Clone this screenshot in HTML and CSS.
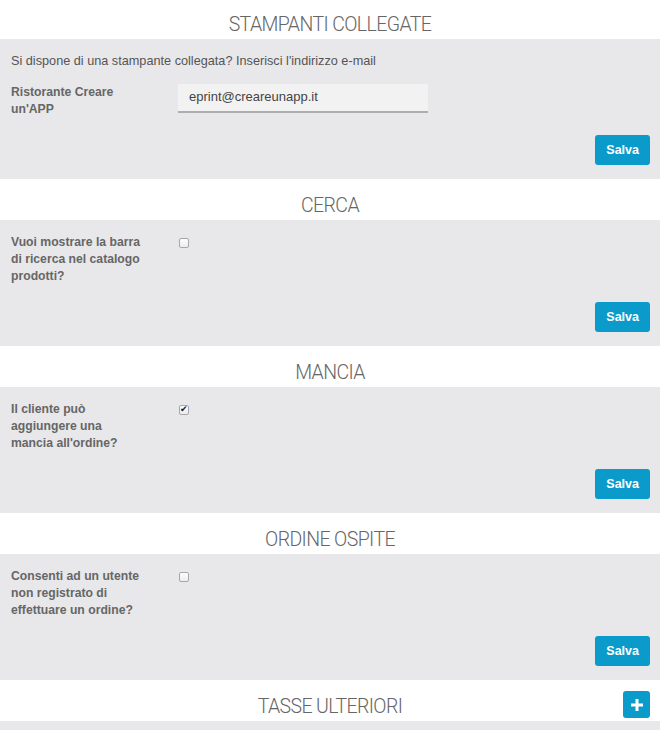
FILE: index.html
```html
<!DOCTYPE html>
<html lang="it">
<head>
<meta charset="UTF-8">
<meta name="viewport" content="width=device-width, initial-scale=1.0">
<title>Impostazioni</title>
<link rel="stylesheet" href="styles.css">
</head>
<body>

<div class="section">
    <h2 class="section-title first">STAMPANTI COLLEGATE</h2>
    <div class="panel">
        <p class="intro">Si dispone di una stampante collegata? Inserisci l'indirizzo e-mail</p>
        <div class="form-row">
            <label class="row-label" for="printerEmail">Ristorante Creare un'APP</label>
            <input type="text" id="printerEmail" class="text-input" value="eprint@creareunapp.it">
        </div>
        <div class="actions"><button class="btn">Salva</button></div>
    </div>
</div>

<div class="section">
    <h2 class="section-title">CERCA</h2>
    <div class="panel">
        <div class="form-row">
            <label class="row-label" for="showSearch">Vuoi mostrare la barra di ricerca nel catalogo prodotti?</label>
            <input type="checkbox" id="showSearch" class="check">
        </div>
        <div class="actions"><button class="btn">Salva</button></div>
    </div>
</div>

<div class="section">
    <h2 class="section-title">MANCIA</h2>
    <div class="panel">
        <div class="form-row">
            <label class="row-label" for="allowTip">Il cliente può aggiungere una mancia all'ordine?</label>
            <input type="checkbox" id="allowTip" class="check" checked>
        </div>
        <div class="actions"><button class="btn">Salva</button></div>
    </div>
</div>

<div class="section">
    <h2 class="section-title">ORDINE OSPITE</h2>
    <div class="panel">
        <div class="form-row">
            <label class="row-label" for="guestOrder">Consenti ad un utente non registrato di effettuare un ordine?</label>
            <input type="checkbox" id="guestOrder" class="check">
        </div>
        <div class="actions"><button class="btn">Salva</button></div>
    </div>
</div>

<div class="section">
    <div class="section-title with-action">
        <span></span>
        <h2 class="title-text">TASSE ULTERIORI</h2>
        <button class="btn btn-add" title="Aggiungi">
            <svg width="12" height="12" viewBox="0 0 12 12"><path d="M4.5 0h3v4.5H12v3H7.5V12h-3V7.5H0v-3h4.5z" fill="#fff"/></svg>
        </button>
    </div>
    <div class="panel"></div>
</div>

</body>
</html>
```

FILE: styles.css
```css
body {
    margin: 0;
    padding: 0;
    background-color: #ffffff;
    font-family: "Liberation Sans", Arial, sans-serif;
    font-size: 12px;
    color: #555;
}
.section-title {
    margin: 2px 0 0 0;
    height: 39px;
    box-sizing: border-box;
    padding-top: 13px;
    text-align: center;
    font-family: Roboto, "Open Sans", sans-serif;
    font-weight: 300;
    font-size: 19.5px;
    letter-spacing: -0.6px;
    line-height: 24px;
    color: #666;
}
.section-title.first {
    margin-top: 0;
}
.with-action {
    display: grid;
    grid-template-columns: 1fr auto 1fr;
    align-items: start;
    padding-top: 9px;
}
.title-text {
    margin: 0;
    padding-top: 4px;
    font: inherit;
    letter-spacing: inherit;
    color: inherit;
}
.panel {
    background-color: #e8e8ea;
    padding: 14px 10px 14px 11px;
    min-height: 40px;
}
.intro {
    margin: 0 0 14px 0;
    font-size: 12.7px;
    line-height: 17px;
}
.form-row {
    display: flex;
    align-items: flex-start;
    margin-bottom: 17px;
}
.row-label {
    width: 132px;
    margin-right: 35px;
    font-weight: bold;
    font-size: 12.2px;
    line-height: 17px;
    color: #666;
}
.text-input {
    width: 250px;
    height: 29px;
    box-sizing: border-box;
    padding: 0 11px 3px;
    border: none;
    border-bottom: 2px solid #adadad;
    background-color: #f2f2f2;
    font-family: "Liberation Sans", Arial, sans-serif;
    font-size: 13px;
    color: #444;
}
.check {
    -webkit-appearance: none;
    appearance: none;
    position: relative;
    margin: 4px 0 0 1px;
    width: 10px;
    height: 10px;
    box-sizing: border-box;
    border: 1px solid #a8a8a8;
    border-radius: 2px;
    background: linear-gradient(#fdfdfd, #ececec);
}
.check:checked::after {
    content: "\2714";
    position: absolute;
    left: 0;
    top: -3px;
    font-size: 9px;
    line-height: 12px;
    color: #222;
}
.actions {
    display: flex;
    justify-content: flex-end;
}
.btn {
    height: 30px;
    padding: 0 11px;
    background-color: #0a9bcb;
    color: #fff;
    border: none;
    border-radius: 3px;
    font-family: "Liberation Sans", Arial, sans-serif;
    font-size: 12.5px;
    font-weight: bold;
    cursor: pointer;
}
.btn-add {
    justify-self: end;
    width: 27px;
    height: 27px;
    padding: 0;
    margin-right: 10px;
    display: flex;
    align-items: center;
    justify-content: center;
}
```
